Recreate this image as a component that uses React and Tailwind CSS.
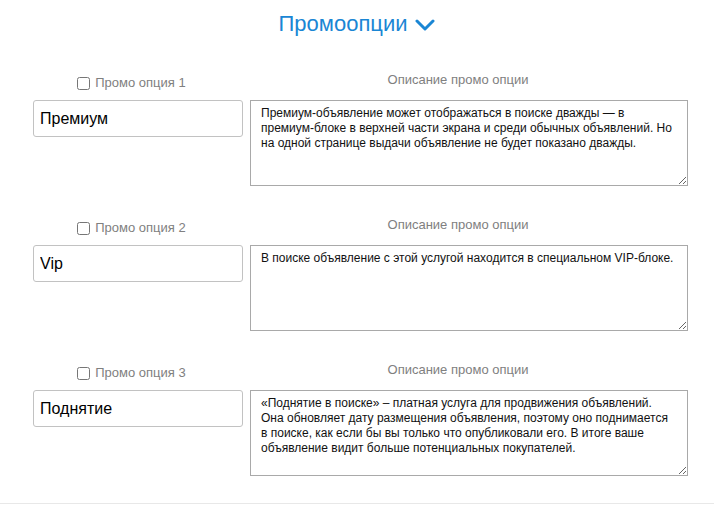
import { useState } from 'react';

const options = [
  {
    id: 1,
    name: 'Премиум',
    text: 'Премиум-объявление может отображаться в поиске дважды — в\nпремиум-блоке в верхней части экрана и среди обычных объявлений. Но\nна одной странице выдачи объявление не будет показано дважды.',
  },
  {
    id: 2,
    name: 'Vip',
    text: 'В поиске объявление с этой услугой находится в специальном VIP-блоке.',
  },
  {
    id: 3,
    name: 'Поднятие',
    text: '«Поднятие в поиске» – платная услуга для продвижения объявлений.\nОна обновляет дату размещения объявления, поэтому оно поднимается\nв поиске, как если бы вы только что опубликовали его. В итоге ваше\nобъявление видит больше потенциальных покупателей.',
  },
];

export default function App() {
  const [items, setItems] = useState(options);

  const update = (id, field, value) => {
    setItems(items.map(it => (it.id === id ? { ...it, [field]: value } : it)));
  };

  return (
    <div className="min-h-screen bg-white font-['Liberation_Sans',Arial,sans-serif]">
      <div className="pt-[10px] flex justify-center items-center gap-[8px] h-[38px]">
        <span className="text-[22px] leading-[28px] text-[#1a86d4]">Промоопции</span>
        <svg width="20" height="14" viewBox="0 0 20 14" className="mt-[1px]">
          <polyline points="2,3 10,11 18,3" fill="none" stroke="#1a86d4" strokeWidth="3" strokeLinecap="round" strokeLinejoin="round" />
        </svg>
      </div>

      <div className="mt-[34px] pl-[33px] pr-[27px] flex flex-col gap-[31px]">
        {items.map(it => (
          <div key={it.id} className="flex gap-[7px]">
            <div className="w-[210px] flex flex-col">
              <label className="h-[16px] mt-[3px] pr-[13px] flex items-center justify-center gap-[5px] text-[13px] leading-[16px] text-[#808080]">
                <input type="checkbox" className="m-0 w-[13px] h-[13px]" />
                Промо опция {it.id}
              </label>
              <input
                value={it.name}
                onChange={e => update(it.id, 'name', e.target.value)}
                className="mt-[9px] h-[37px] w-[210px] border border-[#c2c2c2] rounded-[3px] px-[6px] text-[16px] text-black outline-none"
              />
            </div>
            <div className="w-[438px] flex flex-col">
              <div className="h-[16px] pr-[22px] text-center text-[13px] leading-[16px] text-[#808080]">Описание промо опции</div>
              <textarea
                value={it.text}
                onChange={e => update(it.id, 'text', e.target.value)}
                className="mt-[12px] h-[86px] w-[438px] border border-[#a9a9a9] pl-[10px] pr-[4px] pt-[5px] text-[12px] leading-[15px] text-[#111] outline-none"
              />
            </div>
          </div>
        ))}
      </div>

      <div className="mt-[27px] border-t border-[#e8e8e8]" />
    </div>
  );
}
